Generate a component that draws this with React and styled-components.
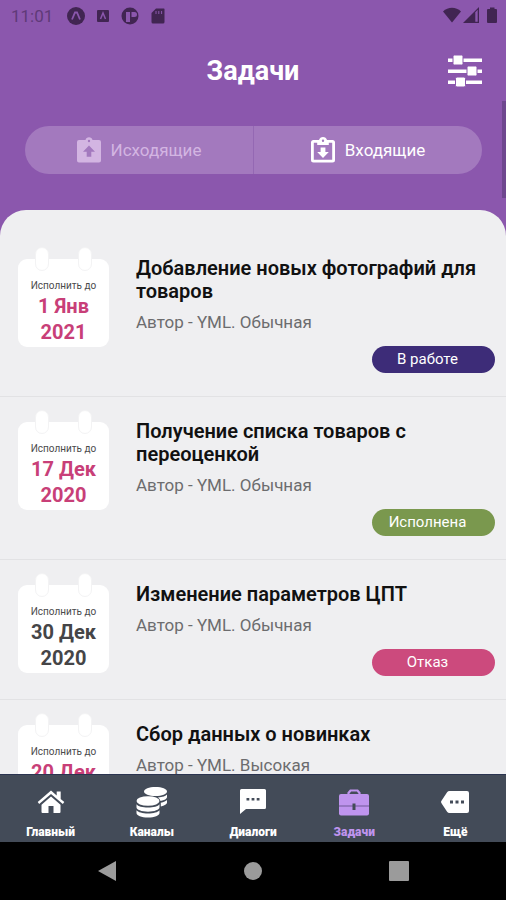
import React, { useState } from 'react'
import styled, { createGlobalStyle } from 'styled-components'

const tasks = [
  { id: 1, title: 'Добавление новых фотографий для товаров', priority: 'Обычная', day: '1 Янв', year: '2021', iso: '2021-01-01', status: 'work' },
  { id: 2, title: 'Получение списка товаров с переоценкой', priority: 'Обычная', day: '17 Дек', year: '2020', iso: '2020-12-17', status: 'done' },
  { id: 3, title: 'Изменение параметров ЦПТ', priority: 'Обычная', day: '30 Дек', year: '2020', iso: '2020-12-30', status: 'refused' },
  { id: 4, title: 'Сбор данных о новинках', priority: 'Высокая', day: '20 Дек', year: '2020', iso: '2020-12-20', status: 'work' },
]

const statuses = {
  work: { label: 'В работе', color: '#3d2c78', date: '#c83f78' },
  done: { label: 'Исполнена', color: '#7a984e', date: '#c83f78' },
  refused: { label: 'Отказ', color: '#cc4a7d', date: '#454547' },
}

const StatusIcons = () => (
  <svg width="98" height="18" viewBox="0 0 98 18" fill="#412552" aria-hidden="true">
    <circle cx="9" cy="9" r="9" />
    <path d="M5 12.500L8 5.500h2L13 12.500" fill="none" stroke="#8b57ad" strokeWidth="1.800" />
    <rect x="30" y="3" width="12" height="12" rx="1" />
    <path d="M33.500 12L36 6L38.500 12" fill="none" stroke="#8b57ad" strokeWidth="1.500" />
    <circle cx="63" cy="9" r="8.500" />
    <path d="M59 15V5h4v10zM64.500 5h3a2.500 2.500 0 0 1 0 5h-3z" fill="#8b57ad" />
    <path d="M97 1.500H89L84.500 6v9a1.500 1.500 0 0 0 1.500 1.500h10a1.500 1.500 0 0 0 1.500-1.500V2z" />
    <path d="M89 4v3M91.800 4v3M94.600 4v3" stroke="#8b57ad" strokeWidth="1" />
  </svg>
)

const SignalIcons = () => (
  <svg width="54" height="18" viewBox="0 0 54 18" fill="#412552" aria-hidden="true">
    <path d="M0 4.500C5-.5 13-.5 18 4.500L9 15.500z" />
    <path d="M20 16L36 0v16z" />
    <path d="M32.300 5.200L34.700 2.800V14.700H32.300z" fill="#8b57ad" />
    <path d="M47 .5h4.500v1.500H53a1 1 0 0 1 1 1V15a1 1 0 0 1-1 1h-8a1 1 0 0 1-1-1V3a1 1 0 0 1 1-1h2z" />
  </svg>
)

const FilterIcon = () => (
  <svg width="34" height="32" viewBox="0 0 34 32" fill="#fff" aria-hidden="true">
    <path d="M0 3.500h34v3.500H0zM0 14.500h34v3.500H0zM0 25.500h34v3.500H0z" />
    <g stroke="#8b57ad" strokeWidth="1">
      <rect x="5" y="0" width="10" height="10" rx="1.500" />
      <rect x="19" y="11" width="10" height="10" rx="1.500" />
      <rect x="7.500" y="22" width="10" height="10" rx="1.500" />
    </g>
  </svg>
)

const OutgoingIcon = () => (
  <svg width="24" height="26" viewBox="0 0 24 26" aria-hidden="true">
    <path
      fill="currentColor"
      fillRule="evenodd"
      d="M2 3h6.500a3.600 3.600 0 0 1 7 0H22a2 2 0 0 1 2 2v18.500a2 2 0 0 1-2 2H2a2 2 0 0 1-2-2V5a2 2 0 0 1 2-2zM12 2.800a1.200 1.200 0 1 0 0 2.400a1.200 1.200 0 0 0 0-2.400zM12 8.500L6 14.700h3.700v5h4.600v-5H18z"
    />
  </svg>
)

const IncomingIcon = () => (
  <svg width="24" height="26" viewBox="0 0 24 26" aria-hidden="true">
    <path
      fill="currentColor"
      fillRule="evenodd"
      d="M2.500 3H8a4.200 4.200 0 0 1 8 0h5.500A2.500 2.500 0 0 1 24 5.500V23a2.500 2.500 0 0 1-2.500 2.500h-19A2.500 2.500 0 0 1 0 23V5.500A2.500 2.500 0 0 1 2.500 3zM2.800 5.800v17h18.400v-17h-3.400V8H6.200V5.800zM12 2.500a1.200 1.200 0 1 0 0 2.400a1.200 1.200 0 0 0 0-2.400z"
    />
    <path fill="currentColor" d="M9.600 10.500h4.800v4.500h3.400L12 21L6.200 15h3.400z" />
  </svg>
)

const HomeIcon = () => (
  <svg width="28" height="24" viewBox="0 0 28 24" fill="#fff" aria-hidden="true">
    <path d="M14 6.500l9.500 8.200V22a1 1 0 0 1-1 1H16.500v-7h-5v7h-6a1 1 0 0 1-1-1v-7.300z" />
    <path d="M14 .5L.7 12l1.500 1.900L14 3.900l11.800 10 1.500-1.900-3.600-3.100V1.500h-4v3.900z" />
  </svg>
)

const CoinsIcon = () => (
  <svg width="32" height="32" viewBox="0 0 32 32" fill="#fff" aria-hidden="true">
    <path d="M8 5.500C8 3 13 1 19.500 1S31 3 31 5.500 26 10 19.500 10 8 8 8 5.500z" />
    <path d="M22 11.400c4.500-.3 8-1.600 9-3v2.800c0 1.500-2.500 3-6.500 3.700-.5-1.500-1.300-2.600-2.500-3.500zM24.800 16.700c3-.5 5.200-1.500 6.200-2.700v2.800c0 1.500-2.500 2.900-6.200 3.600z" />
    <ellipse cx="12" cy="15" rx="11.500" ry="4.800" />
    <path d="M.5 18.200C2 20.300 6.500 21.500 12 21.500s10-1.200 11.500-3.300v3.100c0 2.400-5 4.400-11.500 4.400S.5 23.700.5 21.300z" />
    <path d="M.5 24.300c1.500 2 6 3.200 11.500 3.200s10-1.200 11.500-3.200v2.700c0 2.500-5 4.500-11.500 4.500S.5 29.500.5 27z" />
  </svg>
)

const ChatIcon = () => (
  <svg width="26" height="26" viewBox="0 0 26 26" aria-hidden="true">
    <path fill="#fff" d="M1.500 0h23A1.500 1.500 0 0 1 26 1.500v17a1.500 1.500 0 0 1-1.500 1.500H6l-6 5v-23.500A1.500 1.500 0 0 1 1.500 0z" />
    <path fill="#434b58" d="M6.500 9h2.800v2.600H6.500zM11.600 9h2.800v2.600h-2.800zM16.700 9h2.800v2.600h-2.800z" />
  </svg>
)

const CaseIcon = () => (
  <svg width="30" height="27" viewBox="0 0 30 27" aria-hidden="true">
    <path fill="none" stroke="#bf94ee" strokeWidth="2.200" d="M9.500 6V4L11.500 1.500h7L20.500 4v2" />
    <path fill="#bf94ee" d="M2 5h26a2 2 0 0 1 2 2v17.500a2 2 0 0 1-2 2H2a2 2 0 0 1-2-2V7a2 2 0 0 1 2-2z" />
    <path stroke="#8a6db4" strokeWidth="1.500" d="M0 17h30" />
    <path fill="#434b58" d="M13.500 14.500h3V21h-3z" />
  </svg>
)

const MoreIcon = () => (
  <svg width="28" height="22" viewBox="0 0 28 22" aria-hidden="true">
    <path fill="#fff" d="M8.500 0H26a2 2 0 0 1 2 2v18a2 2 0 0 1-2 2H8.500a3 3 0 0 1-2.400-1.200L.5 12.200a2 2 0 0 1 0-2.400L6.100 1.200A3 3 0 0 1 8.500 0z" />
    <path fill="#434b58" d="M9 9.600h3v3H9zM14.500 9.600h3v3h-3zM20 9.600h3v3h-3z" />
  </svg>
)

const tabs = [
  { id: 'out', label: 'Исходящие', Icon: OutgoingIcon },
  { id: 'in', label: 'Входящие', Icon: IncomingIcon },
]

const menu = [
  { id: 'home', label: 'Главный', Icon: HomeIcon },
  { id: 'channels', label: 'Каналы', Icon: CoinsIcon },
  { id: 'dialogs', label: 'Диалоги', Icon: ChatIcon },
  { id: 'tasks', label: 'Задачи', Icon: CaseIcon },
  { id: 'more', label: 'Ещё', Icon: MoreIcon },
]

const TaskCard = ({ title, priority, day, year, iso, status }) => {
  const { label, color, date } = statuses[status]
  return (
    <Task>
      <Calendar>
        <Hook $side="left" />
        <Hook $side="right" />
        <small>Исполнить до</small>
        <DueDate dateTime={iso} $color={date}>
          <span>{day}</span>
          <span>{year}</span>
        </DueDate>
      </Calendar>
      <TaskBody>
        <h2>{title}</h2>
        <p>Автор - YML. {priority}</p>
        <Badge $color={color}>{label}</Badge>
      </TaskBody>
    </Task>
  )
}

const App = () => {
  const [tab, setTab] = useState('in')

  return (
    <Screen>
      <GlobalStyle />
      <StatusBar>
        <span>11:01</span>
        <StatusIcons />
        <SignalIcons />
      </StatusBar>
      <Header>
        <h1>Задачи</h1>
        <FilterButton type="button" aria-label="Фильтр">
          <FilterIcon />
        </FilterButton>
      </Header>
      <Tabs>
        {tabs.map(({ id, label, Icon }) => (
          <Tab key={id} type="button" $active={tab === id} aria-pressed={tab === id} onClick={() => setTab(id)}>
            <Icon />
            {label}
          </Tab>
        ))}
      </Tabs>
      <TaskList>
        {tasks.map((task) => (
          <TaskCard key={task.id} {...task} />
        ))}
      </TaskList>
      <BottomNav>
        {menu.map(({ id, label, Icon }) => (
          <NavLink key={id} href={`#${id}`} $active={id === 'tasks'}>
            <span className="icon"><Icon /></span>
            {label}
          </NavLink>
        ))}
      </BottomNav>
      <SystemBar>
        <button type="button" aria-label="Назад">
          <svg width="18" height="20" viewBox="0 0 18 20"><path fill="#9b9b9b" d="M18 0v20L0 10z" /></svg>
        </button>
        <button type="button" aria-label="Домой">
          <svg width="18" height="18" viewBox="0 0 18 18"><circle cx="9" cy="9" r="9" fill="#9b9b9b" /></svg>
        </button>
        <button type="button" aria-label="Обзор">
          <svg width="20" height="20" viewBox="0 0 20 20"><rect width="20" height="20" rx="1" fill="#9b9b9b" /></svg>
        </button>
      </SystemBar>
      <ScrollThumb />
    </Screen>
  )
}

export default App

const GlobalStyle = createGlobalStyle`
  * {
    box-sizing: border-box;
    margin: 0;
    padding: 0;
  }

  body {
    font-family: Roboto, "Noto Sans", sans-serif;
    background: #8b57ad;
  }

  button {
    border: none;
    background: none;
    font: inherit;
    cursor: pointer;
  }

  svg {
    display: block;
  }
`

const Screen = styled.div`
  position: relative;
  display: flex;
  flex-direction: column;
  height: 100vh;
  overflow: hidden;
  background: #8b57ad;
`

const StatusBar = styled.div`
  display: flex;
  align-items: center;
  height: 32px;
  padding: 0 9px 0 11px;
  font-size: 17px;
  color: #5f3a78;

  span {
    margin-right: 14px;
  }

  svg:last-child {
    margin-left: auto;
  }
`

const Header = styled.header`
  display: grid;
  grid-template-columns: 1fr auto 1fr;
  align-items: center;
  height: 78px;
  padding: 0 24px;

  h1 {
    grid-column: 2;
    font-size: 27px;
    font-weight: 700;
    line-height: 32px;
    color: #fff;
  }
`

const FilterButton = styled.button`
  justify-self: end;
`

const Tabs = styled.div`
  display: flex;
  flex-shrink: 0;
  height: 48px;
  margin: 16px 24px 36px 25px;
  border-radius: 24px;
  background: #a379be;
  overflow: hidden;
`

const Tab = styled.button`
  flex: 1;
  display: flex;
  align-items: center;
  justify-content: center;
  gap: 10px;
  font-size: 17px;
  color: ${({ $active }) => ($active ? '#fff' : '#d3b5e2')};

  & + & {
    border-left: 1px solid #9468b3;
  }
`

const TaskList = styled.main`
  flex: 1;
  min-height: 0;
  padding-top: 24px;
  border-radius: 26px 26px 0 0;
  background: #efeff1;
  overflow-x: hidden;
  overflow-y: auto;
  scrollbar-width: none;
`

const Task = styled.article`
  display: flex;
  gap: 27px;
  padding: 23px 11px 23px 18px;
  border-bottom: 1px solid #e2e2e4;
`

const Calendar = styled.div`
  position: relative;
  flex-shrink: 0;
  align-self: flex-start;
  display: flex;
  flex-direction: column;
  width: 91px;
  height: 88px;
  margin-top: 2px;
  padding-top: 20px;
  border-radius: 9px;
  background: #fff;
  text-align: center;

  small {
    font-size: 10px;
    line-height: 14px;
    color: #4a4a4c;
  }
`

/* binder rings sticking out over the top edge */
const Hook = styled.i`
  position: absolute;
  top: -12px;
  ${({ $side }) => $side}: 17px;
  width: 14px;
  height: 24px;
  border: 1px solid #f3f3f4;
  border-radius: 7px;
  background: #fff;
`

const DueDate = styled.time`
  display: flex;
  flex-direction: column;
  font-size: 20px;
  font-weight: 700;
  line-height: 26px;
  color: ${({ $color }) => $color};
`

const TaskBody = styled.div`
  flex: 1;
  display: flex;
  flex-direction: column;

  h2 {
    font-size: 20px;
    font-weight: 600;
    line-height: 23px;
    color: #111;
  }

  p {
    margin: 8px 0 12px;
    font-size: 17px;
    line-height: 23px;
    color: #6c6c6e;
  }
`

const Badge = styled.span`
  align-self: flex-end;
  width: 123px;
  padding-right: 12px;
  border-radius: 14px;
  background: ${({ $color }) => $color};
  font-size: 15px;
  line-height: 27px;
  text-align: center;
  color: #fff;
`

const BottomNav = styled.nav`
  display: flex;
  flex-shrink: 0;
  height: 68px;
  border-top: 1px solid #2b3450;
  background: #434b58;
`

const NavLink = styled.a`
  flex: 1;
  display: flex;
  flex-direction: column;
  align-items: center;
  padding-top: 10px;
  font-size: 12px;
  font-weight: 900;
  line-height: 14px;
  text-decoration: none;
  color: ${({ $active }) => ($active ? '#bf94ee' : '#fff')};

  .icon {
    display: flex;
    align-items: center;
    height: 34px;
    margin-bottom: 6px;
  }
`

const SystemBar = styled.div`
  display: grid;
  grid-template-columns: repeat(3, 1fr);
  flex-shrink: 0;
  height: 58px;
  padding: 0 34px;
  background: #000;

  button {
    display: flex;
    align-items: center;
    justify-content: center;
  }
`

const ScrollThumb = styled.div`
  position: absolute;
  top: 101px;
  right: 0;
  width: 4px;
  height: 97px;
  background: #6f478f;
`
